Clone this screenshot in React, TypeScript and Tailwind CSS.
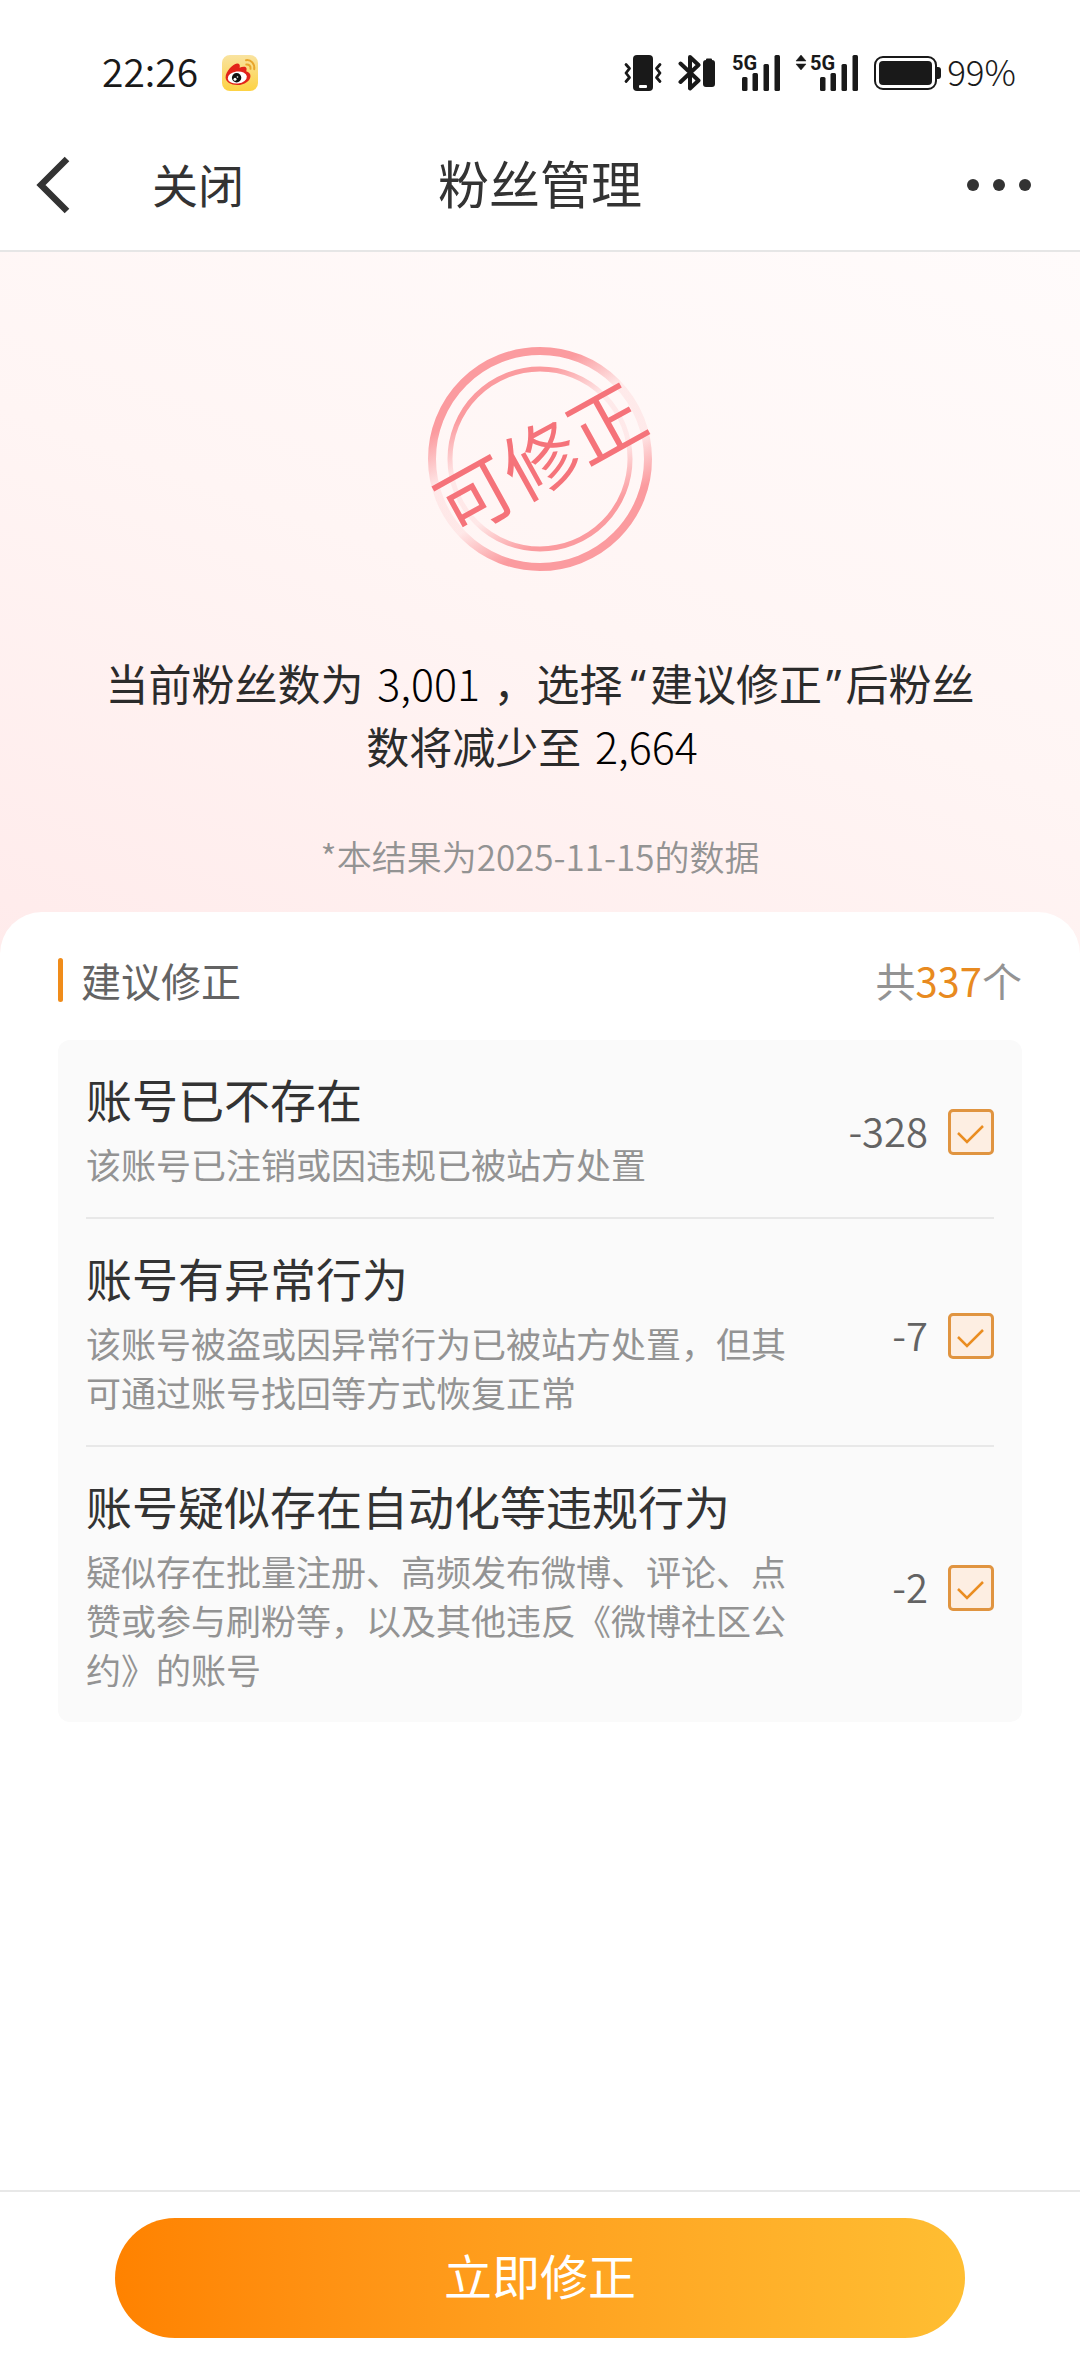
import { useState } from "react";

type Reason = {
  id: string;
  title: string;
  detail: string;
  count: number;
};

const reasons: Reason[] = [
  { id: "gone", title: "账号已不存在", detail: "该账号已注销或因违规已被站方处置", count: 328 },
  {
    id: "abnormal",
    title: "账号有异常行为",
    detail: "该账号被盗或因异常行为已被站方处置，但其可通过账号找回等方式恢复正常",
    count: 7,
  },
  {
    id: "automated",
    title: "账号疑似存在自动化等违规行为",
    detail: "疑似存在批量注册、高频发布微博、评论、点赞或参与刷粉等，以及其他违反《微博社区公约》的账号",
    count: 2,
  },
];

function WeiboIcon() {
  return (
    <svg width="36" height="36" viewBox="0 0 36 36" aria-hidden="true">
      <defs>
        <linearGradient id="weiboBg" x1="0" y1="0" x2="0" y2="1">
          <stop offset="0" stopColor="#f9e3a0" />
          <stop offset="1" stopColor="#fdd243" />
        </linearGradient>
      </defs>
      <rect width="36" height="36" rx="8" fill="url(#weiboBg)" />
      <path
        d="M3.6 22.5C3.6 16.5 11 8.8 15 8.6c2.600-.1 3.300 1.900 2.600 4.200 2.800-1.200 7-1.700 7 1.300 0 .9-.3 1.500-.4 2.200 2.300.6 4.300 2.200 4.300 4.600 0 4.800-6.200 9.100-13 9.100-6.700 0-11.900-3-11.900-7.500z"
        fill="#e2231a"
      />
      <ellipse cx="15.300" cy="22.500" rx="9.600" ry="6" fill="#fff" transform="rotate(-7 15.300 22.500)" />
      <circle cx="14.600" cy="22.800" r="4.700" fill="#111" />
      <circle cx="13" cy="24.200" r="1.500" fill="#fff" />
      <circle cx="15.500" cy="22" r="0.800" fill="#fff" />
      <path
        d="M24 5.200c5-.8 9 3.700 8.200 9M24.300 9.500c2.700-.3 4.600 1.700 4.200 4.300"
        fill="none"
        stroke="#e8a52c"
        strokeWidth="2"
        strokeLinecap="round"
      />
    </svg>
  );
}

function VibrateIcon() {
  return (
    <svg width="38" height="36" viewBox="0 0 38 36" fill="#191919" aria-hidden="true">
      <rect x="9" y="0" width="20" height="36" rx="4" />
      <rect x="15" y="30" width="8" height="3" rx="1" fill="#fff" />
      <path
        d="M2 9.500l3.500 4-3.500 4.500 3.500 4.500-3.500 4M36 9.500l-3.500 4 3.500 4.500-3.500 4.500 3.500 4"
        fill="none"
        stroke="#191919"
        strokeWidth="2.800"
        strokeLinecap="round"
        strokeLinejoin="round"
      />
    </svg>
  );
}

function BluetoothIcon() {
  return (
    <svg width="38" height="38" viewBox="0 0 38 38" fill="none" aria-hidden="true">
      <path
        d="M2.500 9.500l18 17-8.500 8V3l8.500 8L2.500 28"
        stroke="#191919"
        strokeWidth="4"
        strokeLinecap="round"
        strokeLinejoin="round"
      />
      <path
        d="M29 4.500h4a1 1 0 0 1 1 1V6a3 3 0 0 1 3 3v21a3 3 0 0 1-3 3h-6a3 3 0 0 1-3-3V9a3 3 0 0 1 3-3v-.5a1 1 0 0 1 1-1z"
        fill="#191919"
      />
    </svg>
  );
}

function SignalIcon({ data = false }: { data?: boolean }) {
  return (
    <svg
      width={data ? 62 : 48}
      height="37"
      viewBox={data ? "-14 0 62 37" : "0 0 48 37"}
      fill="#191919"
      className="overflow-visible"
      aria-hidden="true"
    >
      {data && <path d="M-14 7l5-6 5 6zM-14 10h10l-5 6z" strokeLinejoin="round" stroke="#191919" strokeWidth="0.500" />}
      <text x="0" y="16" className="font-['Roboto'] text-[20px] font-bold">
        5G
      </text>
      <rect x="10" y="23" width="5.500" height="14" rx="1.500" />
      <rect x="20.500" y="19" width="5.500" height="18" rx="1.500" />
      <rect x="31.500" y="10" width="5.500" height="27" rx="1.500" />
      <rect x="42.500" y="1" width="5.500" height="36" rx="1.500" />
    </svg>
  );
}

function BatteryIcon() {
  return (
    <svg width="67" height="34" viewBox="0 0 67 34" aria-hidden="true">
      <rect x="1" y="1" width="61" height="32" rx="8" fill="none" stroke="#191919" strokeWidth="2" />
      <rect x="5" y="5" width="53" height="24" rx="4" fill="#191919" />
      <path d="M63 11h1a3 3 0 0 1 3 3v6a3 3 0 0 1-3 3h-1z" fill="#191919" />
    </svg>
  );
}

function Stamp() {
  return (
    <svg
      width="226"
      height="226"
      viewBox="-113 -113 226 226"
      className="overflow-visible"
      role="img"
      aria-label="可修正"
    >
      <defs>
        <linearGradient id="ringFade" gradientUnits="userSpaceOnUse" x1="-36" y1="-65" x2="36" y2="65">
          <stop offset="0" stopColor="#fb9b9f" />
          <stop offset="0.320" stopColor="#fb9b9f" stopOpacity="0.150" />
          <stop offset="0.680" stopColor="#fb9b9f" stopOpacity="0.150" />
          <stop offset="1" stopColor="#fb9b9f" />
        </linearGradient>
      </defs>
      <circle r="108" fill="none" stroke="url(#ringFade)" strokeWidth="8" />
      <circle r="90" fill="none" stroke="url(#ringFade)" strokeWidth="5" />
      <text
        x="0"
        y="29"
        textAnchor="middle"
        transform="rotate(-29)"
        fill="#f5737a"
        className="text-[75px]"
      >
        可修正
      </text>
    </svg>
  );
}

function StatusBar() {
  return (
    <div className="flex h-[119px] items-center justify-between pt-[26px] pr-[64px] pl-[102px] text-[#191919]">
      <div className="flex items-center gap-6">
        <span className="pb-1 text-[39px] leading-none font-[350]">22:26</span>
        <WeiboIcon />
      </div>
      <div className="flex items-center gap-4">
        <VibrateIcon />
        <BluetoothIcon />
        <SignalIcon />
        <SignalIcon data />
        <div className="flex items-center gap-[6px]">
          <BatteryIcon />
          <span className="pb-1 text-[35px] leading-none font-light">99%</span>
        </div>
      </div>
    </div>
  );
}

function NavBar() {
  return (
    <header className="grid h-[133px] grid-cols-[1fr_auto_1fr] items-center border-b-2 border-[#e6e6e6] px-[36px] text-[#333]">
      <div className="flex items-center gap-[82px]">
        <button type="button" aria-label="返回">
          <svg width="34" height="58" viewBox="0 0 34 58" fill="none" aria-hidden="true">
            <path d="M31 3L5 29l26 26" stroke="#333" strokeWidth="6.500" />
          </svg>
        </button>
        <button type="button" className="pb-1 text-[46px] leading-none">
          关闭
        </button>
      </div>
      <h1 className="pb-1 text-[51px] leading-none">粉丝管理</h1>
      <button type="button" aria-label="更多" className="flex gap-[14px] justify-self-end pr-[13px]">
        <span className="size-3 rounded-full bg-[#333]" />
        <span className="size-3 rounded-full bg-[#333]" />
        <span className="size-3 rounded-full bg-[#333]" />
      </button>
    </header>
  );
}

function ReasonRow({
  reason,
  checked,
  onToggle,
}: {
  reason: Reason;
  checked: boolean;
  onToggle: () => void;
}) {
  return (
    <li className="border-b-2 border-[#e8e8e8] pt-[36px] pb-[29px] last:border-b-0">
      <label className="flex cursor-pointer items-center justify-between">
        <span className="flex w-[702px] flex-col gap-[19px]">
          <span className="text-[46px] leading-[44px] text-[#333]">{reason.title}</span>
          <span className="text-[35px] leading-[49px] text-[#939393]">{reason.detail}</span>
        </span>
        <span className="flex items-center gap-[20px]">
          <span className="pb-1 text-[40px] leading-none font-[350] text-[#636363]">-{reason.count}</span>
          <span className="grid size-[46px] place-items-center *:col-start-1 *:row-start-1">
            <input
              type="checkbox"
              checked={checked}
              onChange={onToggle}
              className="peer size-full appearance-none rounded-[5px] border-3 border-[#e09440] bg-white checked:bg-[#fdeee2]"
            />
            <svg
              viewBox="0 0 46 46"
              fill="none"
              aria-hidden="true"
              className="pointer-events-none size-full opacity-0 peer-checked:opacity-100"
            >
              <path d="M10 24l9 9 16-16" stroke="#ea8d21" strokeWidth="2.500" />
            </svg>
          </span>
        </span>
      </label>
    </li>
  );
}

export default function App() {
  const [selected, setSelected] = useState<string[]>(reasons.map((r) => r.id));
  const toggle = (id: string) =>
    setSelected((prev) => (prev.includes(id) ? prev.filter((x) => x !== id) : [...prev, id]));

  return (
    <div className="flex min-h-screen flex-col bg-white font-['Noto_Sans_CJK_SC',sans-serif]">
      <StatusBar />
      <NavBar />
      <main>
        <section className="flex flex-col items-center bg-linear-[20deg,#ffebeb,#fff5f4_50%,#fffbfb] px-[80px] pt-[94px] pb-[74px] text-center">
          <Stamp />
          <p className="mt-[80px] text-[43px] leading-[60px] text-[#2b2b2b]">
            当前粉丝数为 <span className="px-1 font-light text-black">3,001</span> ，选择
            <span className="pr-1 pl-2 font-['Noto_Sans']">“</span>建议修正
            <span className="px-1 font-['Noto_Sans']">”</span>后粉丝
            <br />
            数将减少至 <span className="pr-4 pl-1 font-light text-black">2,664</span>
          </p>
          <p className="mt-[56px] text-[35px] leading-[49px] font-[350] text-[#939393]">*本结果为2025-11-15的数据</p>
        </section>
        <section className="-mt-[42px] rounded-t-[42px] bg-white px-[58px] pt-[44px] pb-10">
          <div className="flex items-center justify-between text-[40px] leading-[48px]">
            <h2 className="flex items-center gap-[18px] text-[#636363]">
              <span className="h-[44px] w-[5px] rounded-sm bg-[#f08c1a]" />
              建议修正
            </h2>
            <p className="text-[#939393]">
              共<span className="text-[#e88a20]">337</span>个
            </p>
          </div>
          <ul className="mt-[36px] rounded-xl bg-[#fafafa] px-[28px]">
            {reasons.map((reason) => (
              <ReasonRow
                key={reason.id}
                reason={reason}
                checked={selected.includes(reason.id)}
                onToggle={() => toggle(reason.id)}
              />
            ))}
          </ul>
        </section>
      </main>
      <footer className="mt-auto border-t-2 border-[#e8e8e8] px-[115px] pt-[26px] pb-[35px]">
        <button
          type="button"
          className="h-[120px] w-full rounded-full bg-linear-to-r from-[#ff8200] to-[#ffbe32] pb-2 text-[48px] leading-none text-white"
        >
          立即修正
        </button>
      </footer>
    </div>
  );
}
